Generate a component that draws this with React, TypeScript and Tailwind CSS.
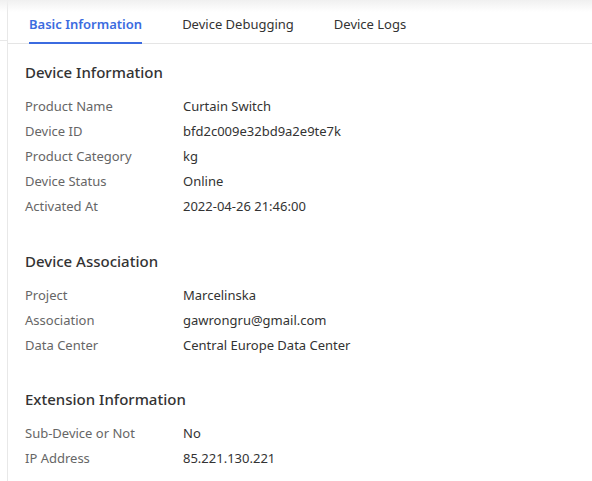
import React, { useState } from "react";

type Row = { label: string; value: string };

const sections: { title: string; gap: string; rows: Row[] }[] = [
  {
    title: "Device Information",
    gap: "mb-[33px]",
    rows: [
      { label: "Product Name", value: "Curtain Switch" },
      { label: "Device ID", value: "bfd2c009e32bd9a2e9te7k" },
      { label: "Product Category", value: "kg" },
      { label: "Device Status", value: "Online" },
      { label: "Activated At", value: "2022-04-26 21:46:00" },
    ],
  },
  {
    title: "Device Association",
    gap: "mb-[32px]",
    rows: [
      { label: "Project", value: "Marcelinska" },
      { label: "Association", value: "gawrongru@gmail.com" },
      { label: "Data Center", value: "Central Europe Data Center" },
    ],
  },
  {
    title: "Extension Information",
    gap: "mb-0",
    rows: [
      { label: "Sub-Device or Not", value: "No" },
      { label: "IP Address", value: "85.221.130.221" },
    ],
  },
];

const tabs = ["Basic Information", "Device Debugging", "Device Logs"];

export default function App() {
  const [active, setActive] = useState(0);

  return (
    <div
      className="relative flex h-[481px] w-[592px] overflow-hidden bg-white"
      style={{ fontFamily: '"Noto Sans", "Open Sans", sans-serif' }}
    >
      {/* top shadow */}
      <div className="pointer-events-none absolute inset-x-0 top-0 h-3 bg-gradient-to-b from-[#f0f0f0] to-white/0" />

      <div className="w-2 shrink-0 border-r border-[#e8e8e8]">
        <div className="h-[41px] border-b border-[#e8e8e8]" />
      </div>

      <div className="flex-1">
        <div className="flex h-[44px] gap-10 border-b border-[#e5e5e5] pl-[21px]">
          {tabs.map((t, i) => (
            <button
              key={t}
              onClick={() => setActive(i)}
              className={
                "relative h-full pt-[11px] text-[13px] leading-[20px] " +
                (i === active
                  ? "font-semibold text-[#3b6be0] after:absolute after:inset-x-0 after:bottom-[-1px] after:h-[2px] after:bg-[#3b6be0]"
                  : "text-[#333]")
              }
            >
              <span className="block -translate-y-[3px]">{t}</span>
            </button>
          ))}
        </div>

        <div className="pl-[17px] pt-[18px]">
          {sections.map((s) => (
            <div key={s.title} className={s.gap}>
              <h2 className="mb-[11px] text-[15px] font-medium leading-[20px] text-[#333]">
                {s.title}
              </h2>
              {s.rows.map((r) => (
                <div
                  key={r.label}
                  className="flex h-[25px] items-center text-[13px] leading-[20px]"
                >
                  <div className="w-[158px] shrink-0 text-[#666]">{r.label}</div>
                  <div className="text-[#333]">{r.value}</div>
                </div>
              ))}
            </div>
          ))}
        </div>
      </div>
    </div>
  );
}
